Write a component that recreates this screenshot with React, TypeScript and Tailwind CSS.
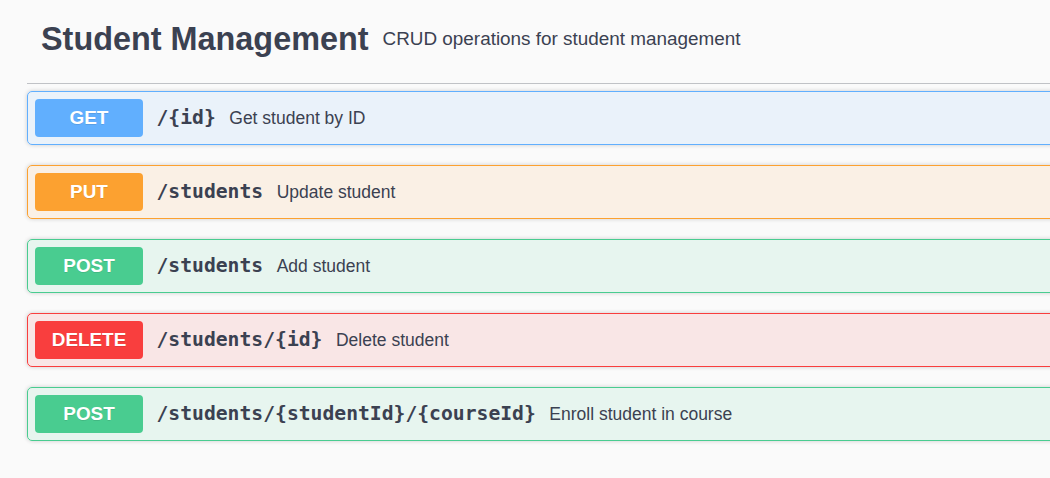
import React from "react";

type Op = {
  method: string;
  path: string;
  summary: string;
  badge: string;
  row: string;
};

const ops: Op[] = [
  {
    method: "GET",
    path: "/{id}",
    summary: "Get student by ID",
    badge: "bg-[#61affe]",
    row: "border-[#61affe] bg-[rgba(97,175,254,0.1)]",
  },
  {
    method: "PUT",
    path: "/students",
    summary: "Update student",
    badge: "bg-[#fca130]",
    row: "border-[#fca130] bg-[rgba(252,161,48,0.1)]",
  },
  {
    method: "POST",
    path: "/students",
    summary: "Add student",
    badge: "bg-[#49cc90]",
    row: "border-[#49cc90] bg-[rgba(73,204,144,0.1)]",
  },
  {
    method: "DELETE",
    path: "/students/{id}",
    summary: "Delete student",
    badge: "bg-[#f93e3e]",
    row: "border-[#f93e3e] bg-[rgba(249,62,62,0.1)]",
  },
  {
    method: "POST",
    path: "/students/{studentId}/{courseId}",
    summary: "Enroll student in course",
    badge: "bg-[#49cc90]",
    row: "border-[#49cc90] bg-[rgba(73,204,144,0.1)]",
  },
];

const sans = "font-['Liberation_Sans',Arial,sans-serif]";

const App = () => {
  return (
    <div className={`w-full h-[478px] overflow-hidden bg-[#fafafa] ${sans}`}>
      <div className="w-[1460px] pl-[27px]">
        {/* tag header */}
        <div className="flex items-center h-[84px] pb-[5px] pl-[14px] border-b border-[rgba(59,65,81,0.3)]">
          <h3 className="text-[32.4px] font-bold text-[#3b4151]">
            Student Management
          </h3>
          <small className="ml-[14px] text-[18.9px] text-[#3b4151]">
            CRUD operations for student management
          </small>
        </div>

        <div className="flex flex-col gap-[20px] mt-[7px]">
          {ops.map((op, i) => (
            <div
              key={i}
              className={`flex items-center h-[54px] px-[7px] border rounded-[5px] shadow-[0_0_4px_rgba(0,0,0,0.19)] ${op.row}`}
            >
              <div
                className={`w-[108px] h-[38px] flex items-center justify-center rounded-[4px] text-white font-bold text-[18.9px] [text-shadow:0_1px_0_rgba(0,0,0,0.1)] ${op.badge}`}
              >
                {op.method}
              </div>
              <span className="px-[13.5px] font-['DejaVu_Sans_Mono',monospace] font-bold text-[19.7px] text-[#3b4151]">
                {op.path}
              </span>
              <span className="text-[17.5px] text-[#3b4151]">{op.summary}</span>
            </div>
          ))}
        </div>
      </div>
    </div>
  );
};

export default App;
